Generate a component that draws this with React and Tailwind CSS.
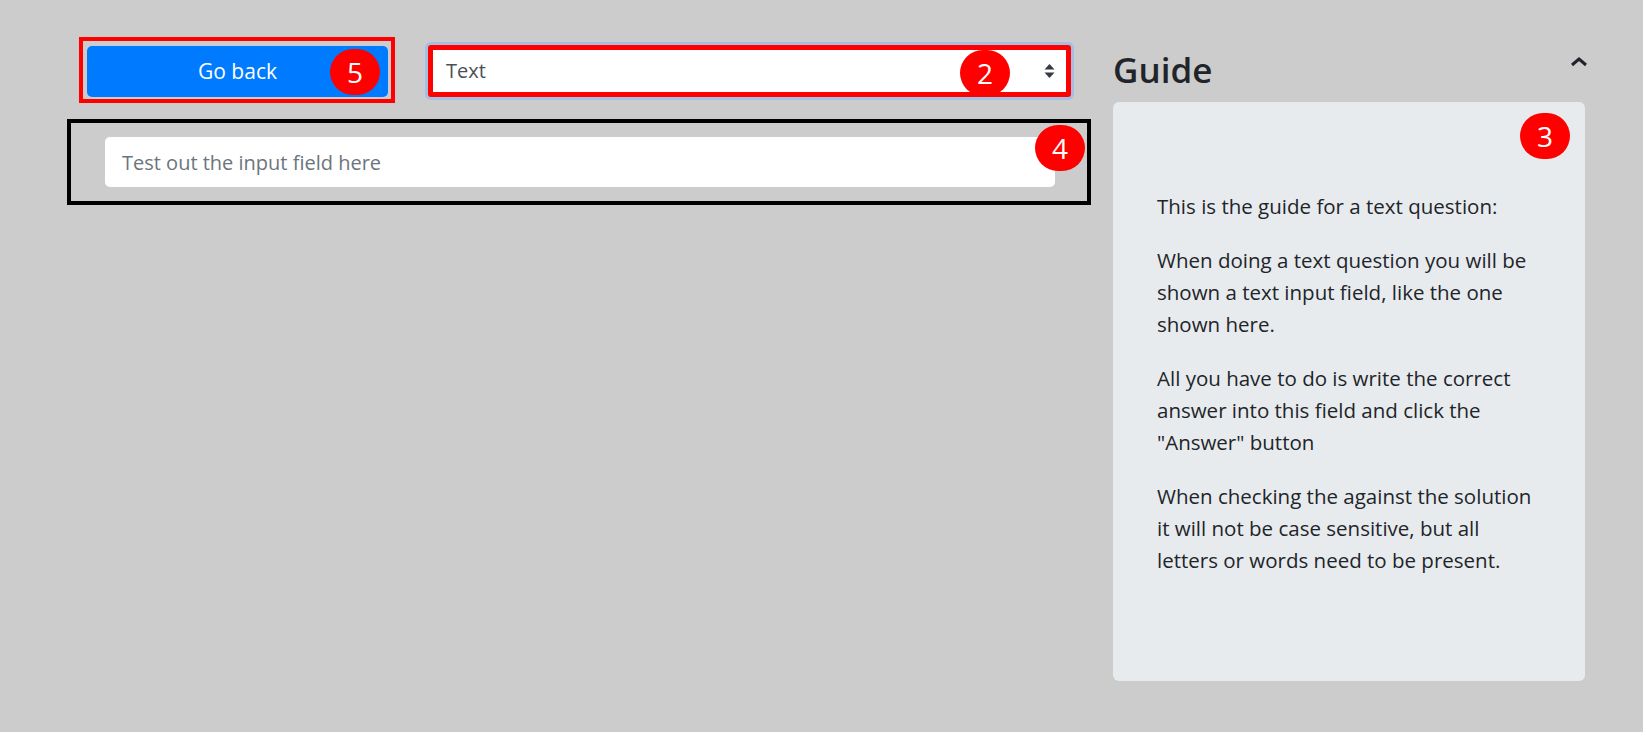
import React from 'react'

const Badge = ({ n, className }) => (
  <div
    className={
      'absolute w-[50px] h-[46px] rounded-full bg-[#ff0000] text-white flex items-center justify-center text-[28px] leading-none ' +
      className
    }
  >
    {n}
  </div>
)

const App = () => {
  return (
    <div className="min-h-screen bg-[#cccccc] font-['Open_Sans',sans-serif] text-[#212529]">
      <div className="flex pl-[67px] pt-[37px] gap-[22px]">
        {/* Left column */}
        <div className="w-[1024px] flex flex-col">
          <div className="flex items-start">
            {/* Go back */}
            <div className="ml-[12px] border-4 border-[#ff0000] pl-[4px] pr-[3px] pt-[5px] pb-[2px]">
              <div className="relative">
                <button className="w-[301px] h-[51px] rounded-[5px] bg-[#007bff] text-white text-[21px] flex items-center justify-center">
                  Go back
                </button>
                <Badge n="5" className="left-[243px] top-[3px]" />
              </div>
            </div>

            {/* Question type select */}
            <div className="ml-[33px] mt-[8px] w-[643px] h-[52px] border-[5px] border-[#ff0000] rounded-[3px] shadow-[0_0_0_3px_#a3bfe3] bg-white relative flex items-center justify-between pl-[13px] pr-[11px]">
              <span className="text-[20px] text-[#495057]">Text</span>
              <svg width="11" height="14" viewBox="0 0 11 14">
                <path d="M5.5 0 L10.5 5.5 L0.5 5.5 Z" fill="#343a40" />
                <path d="M5.5 14 L10.5 8.5 L0.5 8.5 Z" fill="#343a40" />
              </svg>
              <Badge n="2" className="left-[527px] top-[0px] h-[44px]" />
            </div>
          </div>

          {/* Input test box */}
          <div className="mt-[16px] border-4 border-black h-[86px] pl-[34px] pr-[32px] py-[14px] relative">
            <input
              type="text"
              placeholder="Test out the input field here"
              className="w-full h-[50px] rounded-[5px] bg-white px-[17px] text-[20px] text-[#495057] placeholder:text-[#6c757d] outline-none"
            />
            <Badge n="4" className="left-[964px] top-[2px]" />
          </div>
        </div>

        {/* Right column: guide */}
        <div className="w-[472px]">
          <div className="h-[65px] flex items-start justify-between">
            <h2 className="text-[35px] font-semibold leading-none pt-[15px]">Guide</h2>
            <svg width="18" height="10" viewBox="0 0 18 10" className="mr-[-3px] mt-[20px]">
              <path d="M2 8 L9 2 L16 8" fill="none" stroke="#212529" strokeWidth="3" />
            </svg>
          </div>
          <div className="relative h-[579px] rounded-[6px] bg-[#e8ebee] pl-[44px] pr-[47px] pt-[88px] text-[20.5px] leading-[32px]">
            <Badge n="3" className="left-[407px] top-[11px]" />
            <p className="mb-[22px]">This is the guide for a text question:</p>
            <p className="mb-[22px]">
              When doing a text question you will be shown a text input field, like the one shown here.
            </p>
            <p className="mb-[22px]">
              All you have to do is write the correct answer into this field and click the "Answer" button
            </p>
            <p className="mb-[22px]">
              When checking the against the solution it will not be case sensitive, but all letters or words need to be present.
            </p>
          </div>
        </div>
      </div>
    </div>
  )
}

export default App
